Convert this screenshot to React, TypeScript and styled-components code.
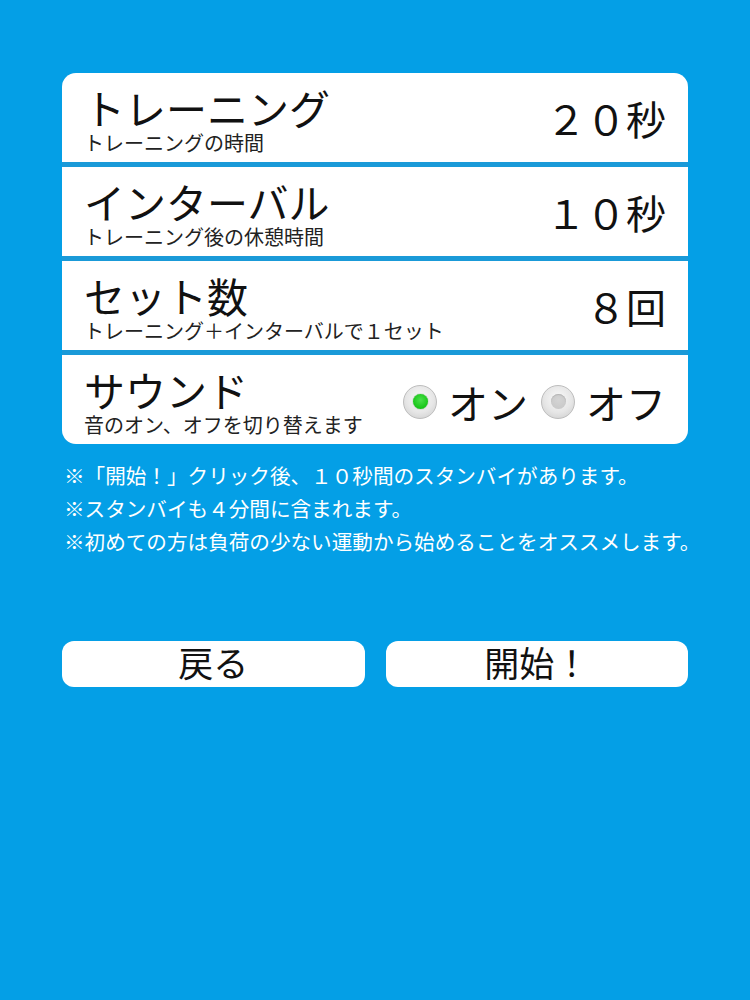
import styled, { createGlobalStyle } from "styled-components";

const GlobalStyle = createGlobalStyle`
    html, body {
        margin: 0;
        padding: 0;
        background-color: #049fe6;
    }
    body {
        font-family: "Noto Sans CJK JP", "Noto Sans", sans-serif;
        color: #111;
    }
`;

type Setting = {
    title: string;
    sub: string;
    value: string;
};

const settings: Setting[] = [
    {title: "トレーニング", sub: "トレーニングの時間", value: "２０秒"},
    {title: "インターバル", sub: "トレーニング後の休憩時間", value: "１０秒"},
    {title: "セット数", sub: "トレーニング＋インターバルで１セット", value: "８回"},
];

const notes = [
    "※「開始！」クリック後、１０秒間のスタンバイがあります。",
    "※スタンバイも４分間に含まれます。",
    "※初めての方は負荷の少ない運動から始めることをオススメします。",
];

export default function App() {
    return (
        <>
            <GlobalStyle/>
            <Page>
                <Card>
                    {settings.map((s) => (
                        <Row key={s.title}>
                            <Label>
                                <Title>{s.title}</Title>
                                <Sub>{s.sub}</Sub>
                            </Label>
                            <Value>{s.value}</Value>
                        </Row>
                    ))}
                    <Row>
                        <Label>
                            <Title>サウンド</Title>
                            <Sub>音のオン、オフを切り替えます</Sub>
                        </Label>
                        <RadioGroup>
                            <Option>
                                <Radio $checked/>
                                <OptionText>オン</OptionText>
                            </Option>
                            <Option>
                                <Radio/>
                                <OptionText>オフ</OptionText>
                            </Option>
                        </RadioGroup>
                    </Row>
                </Card>
                <Notes>
                    {notes.map((n) => (
                        <Note key={n}>{n}</Note>
                    ))}
                </Notes>
                <Buttons>
                    <Button>戻る</Button>
                    <Button>開始！</Button>
                </Buttons>
            </Page>
        </>
    );
}

const Page = styled.div`
    width: 626px;
    margin: 0 auto;
    padding-top: 73px;
    min-height: 1000px;
    box-sizing: border-box;
`;

const Card = styled.div`
    display: flex;
    flex-direction: column;
    gap: 5px;
    background-color: #1a9ad8;
    border-radius: 14px;
    overflow: hidden;
`;

const Row = styled.div`
    height: 89px;
    background-color: #fff;
    display: flex;
    align-items: center;
    justify-content: space-between;
    padding: 0 22px 0 22px;
    box-sizing: border-box;
`;

const Label = styled.div`
    display: flex;
    flex-direction: column;
    gap: 4px;
    padding-top: 4px;
`;

const Title = styled.div`
    font-size: 41px;
    line-height: 42px;
`;

const Sub = styled.div`
    font-size: 20px;
    line-height: 22px;
    color: #222;
    white-space: nowrap;
`;

const Value = styled.div`
    font-size: 40px;
    line-height: 44px;
`;

const RadioGroup = styled.div`
    display: flex;
    align-items: center;
    gap: 13px;
    padding-top: 4px;
`;

const Option = styled.label`
    display: flex;
    align-items: center;
    gap: 11px;
`;

const Radio = styled.span<{ $checked?: boolean }>`
    width: 34px;
    height: 34px;
    border-radius: 50%;
    border: 1px solid #bdbdbd;
    box-sizing: border-box;
    background: radial-gradient(circle at 50% 40%, #fafafa 0%, #e6e6e6 55%, #c9c9c9 100%);
    display: flex;
    align-items: center;
    justify-content: center;

    &::after {
        content: "";
        width: 15px;
        height: 15px;
        border-radius: 50%;
        background: ${(p) => (p.$checked
                ? "radial-gradient(circle at 50% 40%, #4be04b 0%, #17c517 70%, #12a812 100%)"
                : "radial-gradient(circle at 50% 40%, #d4d4d4 0%, #c6c6c6 100%)")};
        box-shadow: ${(p) => (p.$checked ? "0 0 1px #0a7a0a" : "inset 0 1px 1px #b5b5b5")};
    }
`;

const OptionText = styled.span`
    font-size: 40px;
    line-height: 44px;
`;

const Notes = styled.div`
    margin-top: 15px;
    padding-left: 2px;
`;

const Note = styled.div`
    color: #fff;
    font-size: 20.6px;
    line-height: 33px;
    white-space: nowrap;
`;

const Buttons = styled.div`
    display: flex;
    gap: 21px;
    margin-top: 83px;
`;

const Button = styled.button`
    flex: 1;
    height: 46px;
    border: none;
    border-radius: 12px;
    background-color: #fff;
    font-family: "Noto Sans CJK JP", "Noto Sans", sans-serif;
    font-size: 35px;
    line-height: 42px;
    padding: 0 0 4px;
    color: #111;
    cursor: pointer;
`;
